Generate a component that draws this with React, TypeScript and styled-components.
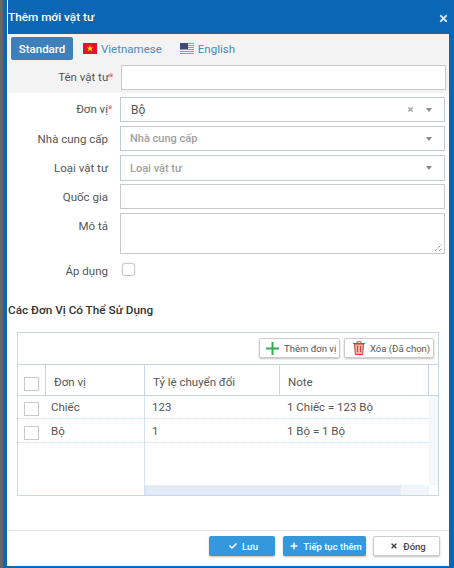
import { createGlobalStyle, styled } from "styled-components";
import { FaCheck, FaPlus, FaTimes } from "react-icons/fa";

const GlobalStyle = createGlobalStyle`
  html, body {
    margin: 0;
    padding: 0;
    background: #666;
    height: 100%;
    overflow: hidden;
  }
  body {
    font-family: Roboto, "Noto Sans", sans-serif;
    font-size: 11.5px;
    color: #555;
  }
`;

const Page = styled.div`
  width: 454px;
  height: 568px;
  padding-left: 3px;
  box-sizing: border-box;
`;

const Modal = styled.div`
  width: 451px;
  height: 568px;
  box-sizing: border-box;
  background: #fff;
  border-left: 4px solid #0b66b5;
  border-right: 5px solid #0b66b5;
  border-bottom: 2px solid #0b66b5;
  display: flex;
  flex-direction: column;
`;

const Header = styled.div`
  height: 34px;
  flex: none;
  margin-left: 1px;
  margin-right: -5px;
  background: #0b66b5;
  color: #fff;
  display: flex;
  align-items: center;
  justify-content: space-between;
  font-size: 11.75px;
  font-weight: 500;
`;

const Close = styled.span`
  color: #cfe0ef;
  display: flex;
  margin: 2px 5px 0 0;
  font-size: 11px;
`;

const Grey = styled.div`
  height: 59px;
  flex: none;
  background: #f3f3f3;
  margin-left: 1px;
  padding-top: 3px;
  box-sizing: border-box;
`;

const Tabs = styled.div`
  height: 23px;
  margin: 0 0 5px 3px;
  display: flex;
  align-items: center;
`;

const Tab = styled.div<{ $active?: boolean }>`
  height: 23px;
  box-sizing: border-box;
  display: flex;
  align-items: center;
  gap: 4px;
  color: ${(p) => (p.$active ? "#fff" : "#4a8ac0")};
  background: ${(p) => (p.$active ? "#3d80bb" : "transparent")};
  border-radius: 2px;
  width: ${(p) => (p.$active ? "62px" : "auto")};
  justify-content: ${(p) => (p.$active ? "center" : "flex-start")};
  margin-right: ${(p) => (p.$active ? "10px" : "18px")};
  font-weight: ${(p) => (p.$active ? 500 : 400)};
`;

const Row = styled.div<{ $mb?: number; $mt?: number }>`
  display: grid;
  grid-template-columns: 104px 325px;
  column-gap: 8px;
  margin-top: ${(p) => p.$mt ?? 0}px;
  margin-bottom: ${(p) => p.$mb ?? 4}px;
  margin-left: 1px;
  align-items: center;
`;

const Label = styled.label<{ $pt?: number; $top?: boolean }>`
  text-align: right;
  color: #555;
  line-height: 14px;
  padding-right: 4px;
  align-self: ${(p) => (p.$top ? "start" : "center")};
  padding-top: ${(p) => p.$pt ?? 0}px;
  white-space: nowrap;
`;

const Star = styled.span`
  display: inline-block;
  width: 0;
  color: #e06060;
  font-size: 10px;
  text-align: left;
`;

const Input = styled.div<{ $h?: number; $blue?: boolean }>`
  height: ${(p) => p.$h ?? 25}px;
  box-sizing: border-box;
  border: 1px solid ${(p) => (p.$blue ? "#c2cad8" : "#c9c9c9")};
  background: #fff;
  display: flex;
  align-items: center;
  padding: 0 12px 0 10px;
  position: relative;
`;

const Value = styled.span<{ $ph?: boolean }>`
  flex: 1;
  font-size: ${(p) => (p.$ph ? "11px" : "12px")};
  font-weight: ${(p) => (p.$ph ? 500 : 400)};
  margin-left: ${(p) => (p.$ph ? "-1px" : "0")};
  color: ${(p) => (p.$ph ? "#a0a0a0" : "#555")};
`;

const Caret = styled.span`
  width: 0;
  height: 0;
  border-left: 3.5px solid transparent;
  border-right: 3.5px solid transparent;
  border-top: 4px solid #888;
  margin-left: 12px;
`;

const Clear = styled.span`
  color: #999;
  display: flex;
  font-size: 7px;
`;

const Grip = styled.svg`
  position: absolute;
  right: 1px;
  bottom: 1px;
`;

const SoftCheck = styled.span`
  width: 13px;
  height: 13px;
  margin-left: 2px;
  align-self: start;
  display: block;
  box-sizing: border-box;
  background: #fff;
  border: 1px solid #c9c9c9;
  border-radius: 3px;
  box-shadow: 0 0 2px rgba(0, 0, 0, 0.15);
`;

const Check = styled.span`
  width: 15px;
  height: 14px;
  margin-top: 4px;
  display: block;
  box-sizing: border-box;
  background: #fff;
  border: 1px solid #c9c9c9;
`;

const Section = styled.div`
  margin: 24px 0 14px 1px;
  flex: none;
  height: 16px;
  line-height: 16px;
  font-size: 11.75px;
  font-weight: 500;
  color: #333;
`;

const Box = styled.div`
  width: 422px;
  height: 164px;
  flex: none;
  box-sizing: border-box;
  margin-left: 10px;
  border: 1px solid #c8d6e8;
  display: flex;
  flex-direction: column;
`;

const Toolbar = styled.div`
  height: 32px;
  box-sizing: border-box;
  flex: none;
  display: flex;
  align-items: center;
  justify-content: flex-end;
  gap: 4px;
  padding: 0 4px 1px 0;
  border-bottom: 1px solid #c9d3df;
`;

const ToolButton = styled.button<{ $w: number; $pl: number }>`
  width: ${(p) => p.$w}px;
  height: 20px;
  padding: 0 0 0 ${(p) => p.$pl}px;
  display: flex;
  align-items: center;
  gap: 5px;
  background: #fff;
  border: 1px solid #ccc;
  border-radius: 2px;
  box-shadow: 0 1px 2px rgba(0, 0, 0, 0.25);
  font-family: inherit;
  font-size: 9.5px;
  color: #555;
  white-space: nowrap;
`;

const Grid = styled.div`
  display: grid;
  grid-template-columns: 28px 99px 135px 149px 9px;
  grid-template-rows: 31px 23px 24px 42px 10px;
  flex: 1;
`;

const HeadCell = styled.div<{ $first?: boolean; $last?: boolean }>`
  border-right: ${(p) => (p.$last ? "none" : "1px solid #c8d6e8")};
  border-bottom: 1px solid #c8d6e8;
  display: flex;
  align-items: center;
  padding: ${(p) => (p.$first ? "3px 0 0 6px" : "4px 0 0 8px")};
  box-sizing: border-box;
  color: #555;
  white-space: nowrap;
`;

const Cell = styled.div<{ $divided?: boolean; $pad?: number; $low?: boolean }>`
  display: flex;
  align-items: center;
  padding: ${(p) => (p.$low ? "1px" : "0")} 0 ${(p) => (p.$low ? "0" : "1px")}
    ${(p) => p.$pad ?? 7}px;
  box-sizing: border-box;
  border-bottom: 1px dotted #c8dcef;
  border-right: ${(p) => (p.$divided ? "1px solid #d7e2f0" : "none")};
  white-space: nowrap;
  color: #555;
`;

const Spare = styled.div<{ $divided?: boolean; $bg?: string; $span?: number }>`
  background: ${(p) => p.$bg ?? "#fff"};
  grid-column: span ${(p) => p.$span ?? 1};
  border-right: ${(p) => (p.$divided ? "1px solid #d7e2f0" : "none")};
`;

const ScrollTrack = styled.div`
  grid-column: span 2;
  background: #f1f5fb;
  display: flex;
`;

const ScrollThumb = styled.div`
  width: 256px;
  background: #e3ebf6;
  border-left: 1px solid #d7e2f0;
  box-sizing: border-box;
`;

const Rule = styled.div`
  height: 1px;
  flex: none;
  background: #e2e2e2;
  margin: 34px 0 5px 1px;
`;

const Footer = styled.div`
  display: flex;
  justify-content: flex-end;
  gap: 8px;
  padding-right: 9px;
`;

const FooterButton = styled.button<{ $plain?: boolean; $w: number }>`
  width: ${(p) => p.$w}px;
  height: 20px;
  margin-left: ${(p) => (p.$plain ? "-1px" : "0")};
  display: flex;
  align-items: center;
  justify-content: center;
  gap: 5px;
  padding: 0 0 0 3px;
  font-family: inherit;
  font-size: 9.5px;
  font-weight: 500;
  border-radius: 2px;
  color: ${(p) => (p.$plain ? "#444" : "#fff")};
  background: ${(p) => (p.$plain ? "#fff" : "#3598dc")};
  border: ${(p) => (p.$plain ? "1px solid #ccc" : "none")};
  box-shadow: 0 1px 2px rgba(0, 0, 0, 0.25);
  white-space: nowrap;
`;

function VietnamFlag() {
  return (
    <svg width="14" height="11" viewBox="0 0 14 11">
      <rect width="14" height="11" fill="#e8112d" />
      <polygon
        points="7,2 7.8,4.5 10.4,4.5 8.3,6 9.1,8.5 7,7 4.9,8.5 5.7,6 3.6,4.5 6.2,4.5"
        fill="#ffdf00"
      />
    </svg>
  );
}

function UsFlag() {
  const stripes = [0, 2, 4, 6, 8, 10];
  return (
    <svg width="14" height="11" viewBox="0 0 14 11">
      <rect width="14" height="11" fill="#f4f4f4" />
      {stripes.map((y) => (
        <rect key={y} y={y} width="14" height="1" fill="#d8808a" />
      ))}
      <rect width="8" height="6" fill="#3c4a75" />
    </svg>
  );
}

function TrashIcon() {
  return (
    <svg width="12" height="14" viewBox="0 0 12 14" fill="none" stroke="#c9453a">
      <path d="M0 2.5h12M4 2.5V.8h4v1.7" />
      <path d="M1.5 3l.8 10.5h7.4L10.5 3z" fill="#eeb1aa" />
      <path d="M4.5 5v6M7.5 5v6" />
    </svg>
  );
}

function PlusIcon() {
  return (
    <svg width="13" height="13" viewBox="0 0 13 13">
      <path d="M6.5 0v13M0 6.5h13" stroke="#35ab4f" strokeWidth="2" />
    </svg>
  );
}

export default function App() {
  return (
    <Page>
      <GlobalStyle />
      <Modal>
        <Header>
          Thêm mới vật tư
          <Close>
            <FaTimes />
          </Close>
        </Header>
        <Grey>
          <Tabs>
            <Tab $active>Standard</Tab>
            <Tab>
              <VietnamFlag /> Vietnamese
            </Tab>
            <Tab>
              <UsFlag /> English
            </Tab>
          </Tabs>
          <Row>
            <Label>
              Tên vật tư<Star>*</Star>
            </Label>
            <Input />
          </Row>
        </Grey>
        <Row $mt={4}>
          <Label>
            Đơn vị<Star>*</Star>
          </Label>
          <Input $blue>
            <Value>Bộ</Value>
            <Clear>
              <FaTimes />
            </Clear>
            <Caret />
          </Input>
        </Row>
        <Row>
          <Label>Nhà cung cấp</Label>
          <Input $blue>
            <Value $ph>Nhà cung cấp</Value>
            <Caret />
          </Input>
        </Row>
        <Row $mb={3}>
          <Label>Loại vật tư</Label>
          <Input $blue $h={26}>
            <Value $ph>Loại vật tư</Value>
            <Caret />
          </Input>
        </Row>
        <Row>
          <Label>Quốc gia</Label>
          <Input />
        </Row>
        <Row $mb={9}>
          <Label $top $pt={6}>
            Mô tả
          </Label>
          <Input $h={41}>
            <Grip width="9" height="9" viewBox="0 0 9 9">
              <path d="M1 8L8 1M5 8L8 5" stroke="#666" strokeDasharray="1 1" />
            </Grip>
          </Input>
        </Row>
        <Row $mb={0}>
          <Label $pt={1}>Áp dụng</Label>
          <SoftCheck />
        </Row>
        <Section>Các Đơn Vị Có Thể Sử Dụng</Section>
        <Box>
          <Toolbar>
            <ToolButton $w={81} $pl={6}>
              <PlusIcon /> Thêm đơn vị
            </ToolButton>
            <ToolButton $w={90} $pl={8}>
              <TrashIcon /> Xóa (Đã chọn)
            </ToolButton>
          </Toolbar>
          <Grid>
            <HeadCell $first>
              <Check />
            </HeadCell>
            <HeadCell>Đơn vị</HeadCell>
            <HeadCell>Tỷ lệ chuyển đổi</HeadCell>
            <HeadCell>Note</HeadCell>
            <HeadCell $last />

            <Cell $pad={6}>
              <Check />
            </Cell>
            <Cell $pad={5} $divided>
              Chiếc
            </Cell>
            <Cell>123</Cell>
            <Cell>1 Chiếc = 123 Bộ</Cell>
            <Spare $bg="#f4f7fc" />

            <Cell $pad={6} $low>
              <Check />
            </Cell>
            <Cell $pad={5} $divided $low>
              Bộ
            </Cell>
            <Cell $low>1</Cell>
            <Cell $low>1 Bộ = 1 Bộ</Cell>
            <Spare $bg="#f4f7fc" />

            <Spare $span={2} $divided />
            <Spare $span={2} />
            <Spare $bg="#f4f7fc" />

            <Spare $span={2} $divided />
            <ScrollTrack>
              <ScrollThumb />
            </ScrollTrack>
            <Spare />
          </Grid>
        </Box>
        <Rule />
        <Footer>
          <FooterButton $w={66}>
            <FaCheck size={8} /> Lưu
          </FooterButton>
          <FooterButton $w={83}>
            <FaPlus size={8} /> Tiếp tục thêm
          </FooterButton>
          <FooterButton $w={67} $plain>
            <FaTimes size={8} /> Đóng
          </FooterButton>
        </Footer>
      </Modal>
    </Page>
  );
}
